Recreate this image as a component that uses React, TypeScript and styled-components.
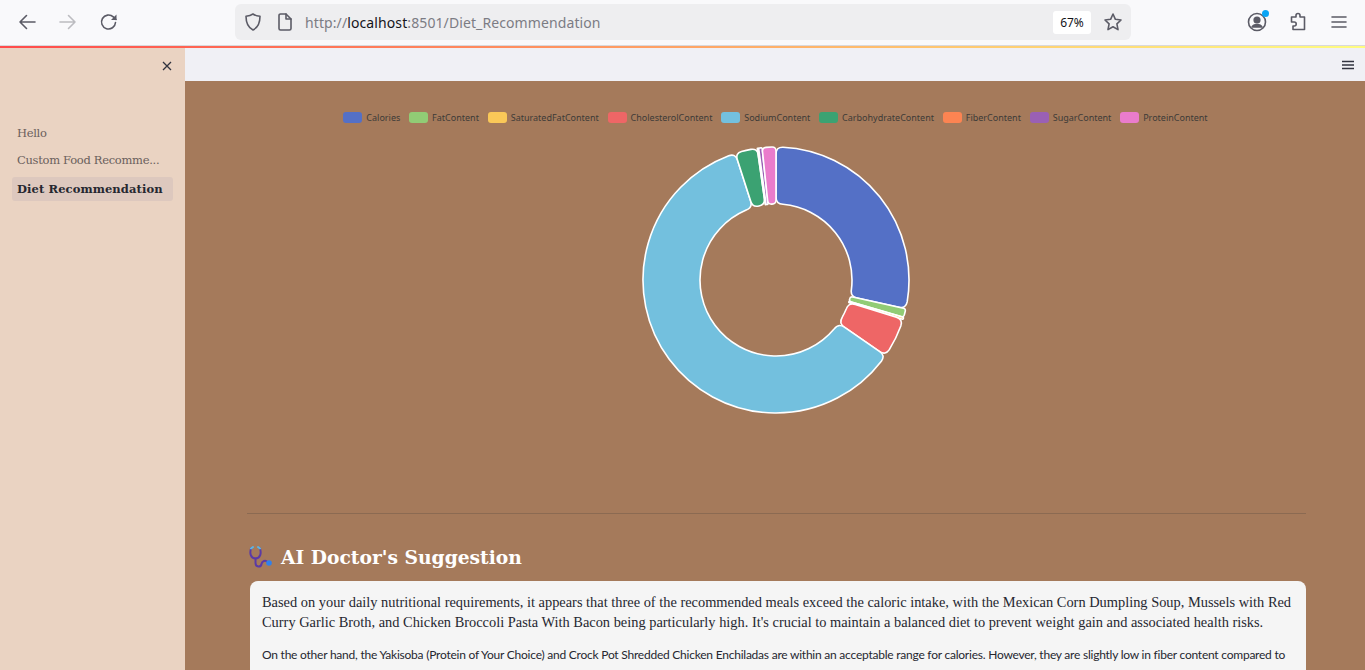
import React from "react";
import styled, { createGlobalStyle } from "styled-components";

const GlobalStyle = createGlobalStyle`
  html, body {
    margin: 0;
    height: 100%;
    overflow: hidden;
  }
  * {
    box-sizing: border-box;
  }
`;

const Page = styled.div`
  width: 1365px;
  height: 670px;
  display: flex;
  flex-direction: column;
  overflow: hidden;
  background: #a57a5b;
`;

// Browser chrome
const BrowserBar = styled.div`
  height: 46px;
  flex: none;
  display: flex;
  align-items: center;
  padding: 0 0 1px 17px;
  background: #f9f9fb;
  border-bottom: 1px solid #d9d9dc;
`;

const NavIcons = styled.div`
  width: 218px;
  display: flex;
  align-items: center;
  gap: 21px;
`;

const IconSvg = styled.svg<{ $faded?: boolean }>`
  width: 20px;
  height: 20px;
  flex: none;
  fill: none;
  stroke: ${(p) => (p.$faded ? "#bcbcc0" : "#5b5b66")};
  stroke-width: 1.6;
  stroke-linecap: round;
  stroke-linejoin: round;
`;

const UrlBar = styled.div`
  width: 896px;
  height: 36px;
  display: flex;
  align-items: center;
  gap: 12px;
  padding: 0 8px;
  background: #eeeef0;
  border-radius: 6px;
`;

const Url = styled.div`
  flex: 1;
  margin-left: -2px;
  font: 14px "Noto Sans", sans-serif;
  letter-spacing: 0.1px;
  color: #7c7c84;

  b {
    font-weight: 400;
    color: #15141a;
  }
`;

const Zoom = styled.div`
  width: 38px;
  height: 23px;
  display: flex;
  align-items: center;
  justify-content: center;
  background: #fff;
  border-radius: 3px;
  font: 12px "Noto Sans", sans-serif;
  color: #15141a;
`;

const RightIcons = styled.div`
  margin-left: 116px;
  display: flex;
  align-items: center;
  gap: 21px;
`;

const AccountWrap = styled.div`
  position: relative;
  display: flex;
`;

const Dot = styled.span`
  position: absolute;
  top: -2px;
  right: -2px;
  width: 7px;
  height: 7px;
  border-radius: 50%;
  background: #0aa5f5;
`;

const Decoration = styled.div`
  height: 2px;
  flex: none;
  background: linear-gradient(90deg, #ff4b4b, #fffd80);
`;

// App
const Body = styled.div`
  flex: 1;
  min-height: 0;
  display: flex;
`;

const Sidebar = styled.aside`
  width: 185px;
  flex: none;
  padding: 10px 12px 0;
  background: #ead3c2;
`;

const CloseRow = styled.div`
  height: 16px;
  margin: 0 -2px 47px 0;
  display: flex;
  justify-content: flex-end;
`;

const NavItem = styled.div<{ $active?: boolean }>`
  height: 24px;
  margin-top: ${(p) => (p.$active ? "5px" : 0)};
  margin-bottom: 3px;
  padding-left: 5px;
  display: flex;
  align-items: center;
  border-radius: 3px;
  white-space: nowrap;
  font-family: "DejaVu Serif", serif;
  font-size: 11.5px;
  letter-spacing: ${(p) => (p.$active ? "0.1px" : "-0.3px")};
  font-weight: ${(p) => (p.$active ? 700 : 400)};
  color: ${(p) => (p.$active ? "#262730" : "#6b5f5c")};
  background: ${(p) => (p.$active ? "#ddc8be" : "transparent")};
`;

const Content = styled.main`
  flex: 1;
  min-width: 0;
  display: flex;
  flex-direction: column;
`;

const Header = styled.div`
  height: 33px;
  flex: none;
  display: flex;
  align-items: center;
  justify-content: flex-end;
  padding-right: 11px;
  background: #f0f0f5;
`;

const Burger = styled.svg`
  width: 12px;
  height: 10px;
  stroke: #31333f;
  stroke-width: 1.4;
`;

const Column = styled.div`
  flex: 1;
  padding: 0 59px 0 62px;
`;

const Legend = styled.ul`
  list-style: none;
  margin: 0 2px 0 0;
  padding: 30px 0 0;
  height: 59px;
  display: flex;
  justify-content: center;
  gap: 8.8px;
`;

const LegendItem = styled.li`
  display: flex;
  align-items: center;
  height: 13px;
  gap: 4px;
  font: 9px "Noto Sans", sans-serif;
  color: #3d3a38;
`;

const Swatch = styled.span<{ $color: string }>`
  width: 19px;
  height: 11px;
  border-radius: 3px;
  background: ${(p) => p.$color};
`;

const DonutWrap = styled.div`
  height: 373px;
  margin-right: 2px;
  display: flex;
  justify-content: center;
`;

const Donut = styled.svg`
  width: 280px;
  height: 280px;
`;

const Divider = styled.hr`
  margin: 0;
  border: 0;
  border-top: 1px solid #8b6a52;
`;

const Heading = styled.h2`
  margin: 28px 0 9px;
  height: 30px;
  display: flex;
  align-items: center;
  gap: 8px;
  font: 700 18.7px "DejaVu Serif", serif;
  color: #fff;
`;

const Card = styled.section`
  margin-left: 3px;
  padding: 11px 12px 0;
  background: #f5f5f5;
  border-radius: 8px;
  color: #262730;
`;

const SerifText = styled.p`
  margin: 0 0 13px;
  font: 14.4px/20px "Liberation Serif", serif;
  white-space: nowrap;
`;

const SansText = styled.p`
  margin: 0;
  font: 12px/20px Lato, sans-serif;
  letter-spacing: -0.23px;
  white-space: nowrap;
`;

const slices = [
  { name: "Calories", color: "#5470c6", from: 0, to: 102.5 },
  { name: "FatContent", color: "#91cc75", from: 102.5, to: 106.3 },
  { name: "SaturatedFatContent", color: "#fac858", from: 106.3, to: 107.2 },
  { name: "CholesterolContent", color: "#ee6666", from: 107.2, to: 124.6 },
  { name: "SodiumContent", color: "#73c0de", from: 124.6, to: 342.2 },
  { name: "CarbohydrateContent", color: "#3ba272", from: 342.2, to: 351.9 },
  { name: "FiberContent", color: "#fc8452", from: 351.9, to: 352.5 },
  { name: "SugarContent", color: "#9a60b4", from: 352.5, to: 354 },
  { name: "ProteinContent", color: "#ea7ccc", from: 354, to: 360 },
];

const CX = 140;
const CY = 140;
const OUTER = 133;
const INNER = 76;

function polar(r: number, deg: number) {
  const a = (deg * Math.PI) / 180;
  return `${(CX + r * Math.sin(a)).toFixed(2)} ${(CY - r * Math.cos(a)).toFixed(2)}`;
}

// ring sector with rounded corners, radius shrinks for the thin ones
function slicePath(from: number, to: number) {
  const span = ((to - from) * Math.PI) / 180;
  const c = Math.min(7, (span * INNER) / 2);
  const dOut = ((c / OUTER) * 180) / Math.PI;
  const dIn = ((c / INNER) * 180) / Math.PI;
  const large = to - from > 180 ? 1 : 0;
  return [
    `M ${polar(OUTER, from + dOut)}`,
    `A ${OUTER} ${OUTER} 0 ${large} 1 ${polar(OUTER, to - dOut)}`,
    `Q ${polar(OUTER, to)} ${polar(OUTER - c, to)}`,
    `L ${polar(INNER + c, to)}`,
    `Q ${polar(INNER, to)} ${polar(INNER, to - dIn)}`,
    `A ${INNER} ${INNER} 0 ${large} 0 ${polar(INNER, from + dIn)}`,
    `Q ${polar(INNER, from)} ${polar(INNER + c, from)}`,
    `L ${polar(OUTER - c, from)}`,
    `Q ${polar(OUTER, from)} ${polar(OUTER, from + dOut)}`,
    "Z",
  ].join(" ");
}

const App: React.FC = () => {
  return (
    <Page>
      <GlobalStyle />
      <BrowserBar>
        <NavIcons>
          <IconSvg viewBox="0 0 20 20">
            <path d="M18 10H3M9.5 3.5 3 10l6.5 6.5" />
          </IconSvg>
          <IconSvg viewBox="0 0 20 20" $faded>
            <path d="M2 10h15M10.5 3.5 17 10l-6.5 6.5" />
          </IconSvg>
          <IconSvg viewBox="0 0 20 20">
            <path d="M16.5 10.5a7 7 0 1 1-2.2-5.6L17 7.5" />
            <path d="M17.5 2.5v5.5H12z" fill="#5b5b66" stroke="none" />
          </IconSvg>
        </NavIcons>
        <UrlBar>
          <IconSvg viewBox="0 0 20 20">
            <path d="M10 2c2 1.400 4.500 2 7 2.200 0 6.500-1.500 11-7 13.800C4.500 15.200 3 10.700 3 4.200 5.500 4 8 3.400 10 2z" />
          </IconSvg>
          <IconSvg viewBox="0 0 20 20">
            <path d="M4 3.500A1.500 1.500 0 0 1 5.500 2H11l5 5v9.500a1.500 1.500 0 0 1-1.500 1.500h-9A1.500 1.500 0 0 1 4 16.500z" />
            <path d="M11 2v5h5" />
          </IconSvg>
          <Url>
            http://<b>localhost</b>:8501/Diet_Recommendation
          </Url>
          <Zoom>67%</Zoom>
          <IconSvg viewBox="0 0 20 20">
            <path d="m10 2 2.400 5.300 5.600.7-4.100 3.900 1.100 5.700-5-2.900-5 2.900 1.100-5.700L2 8l5.600-.7z" />
          </IconSvg>
        </UrlBar>
        <RightIcons>
          <AccountWrap>
            <IconSvg viewBox="0 0 20 20">
              <circle cx="10" cy="10" r="8.500" />
              <circle cx="10" cy="8" r="2.800" fill="#5b5b66" />
              <path d="M5 15c1-2 3-2.500 5-2.500s4 .5 5 2.500z" fill="#5b5b66" />
            </IconSvg>
            <Dot />
          </AccountWrap>
          <IconSvg viewBox="0 0 20 20">
            <path d="M8 3.500a2 2 0 0 1 4 0V5h4.500v12.500H5V14h1.200a2 2 0 0 0 0-4H3.500V5H8z" />
          </IconSvg>
          <IconSvg viewBox="0 0 20 20">
            <path d="M3 5h14M3 10h14M3 15h14" />
          </IconSvg>
        </RightIcons>
      </BrowserBar>
      <Decoration />
      <Body>
        <Sidebar>
          <CloseRow>
            <svg width="16" height="16" viewBox="0 0 16 16" fill="none" stroke="#31333f" strokeWidth="1.300">
              <path d="M4 4l8 8M12 4l-8 8" />
            </svg>
          </CloseRow>
          <NavItem>Hello</NavItem>
          <NavItem>Custom Food Recomme...</NavItem>
          <NavItem $active>Diet Recommendation</NavItem>
        </Sidebar>
        <Content>
          <Header>
            <Burger viewBox="0 0 12 10">
              <path d="M0 1.500h12M0 5h12M0 8.500h12" />
            </Burger>
          </Header>
          <Column>
            <Legend>
              {slices.map((s) => (
                <LegendItem key={s.name}>
                  <Swatch $color={s.color} />
                  {s.name}
                </LegendItem>
              ))}
            </Legend>
            <DonutWrap>
              <Donut viewBox="0 0 280 280">
                {slices.map((s) => (
                  <path key={s.name} d={slicePath(s.from, s.to)} fill={s.color} stroke="#fff" strokeWidth="1.600" />
                ))}
              </Donut>
            </DonutWrap>
            <Divider />
            <Heading>
              <svg width="26" height="26" viewBox="0 0 26 26" fill="none" strokeLinecap="round">
                <path d="M4 4.500C2.500 9 3.500 14.500 8.500 14.500S14.500 9 13 4.500" stroke="#5b3aa6" strokeWidth="2" />
                <path d="M4 4.500 6 3M13 4.500 11 3" stroke="#5ab4e6" strokeWidth="2" />
                <path d="M8.500 14.500V19c0 4.500 5.500 4.500 6 1 .5-3 4-4.500 6-2" stroke="#5b3aa6" strokeWidth="2" />
                <circle cx="22" cy="19" r="2.800" fill="#2f80ed" />
              </svg>
              AI Doctor's Suggestion
            </Heading>
            <Card>
              <SerifText>
                Based on your daily nutritional requirements, it appears that three of the recommended meals exceed the caloric intake, with the Mexican Corn Dumpling Soup, Mussels with Red
                <br />
                Curry Garlic Broth, and Chicken Broccoli Pasta With Bacon being particularly high. It's crucial to maintain a balanced diet to prevent weight gain and associated health risks.
              </SerifText>
              <SansText>
                On the other hand, the Yakisoba (Protein of Your Choice) and Crock Pot Shredded Chicken Enchiladas are within an acceptable range for calories. However, they are slightly low in fiber content compared to
                <br />
                your daily requirement. To improve your fiber intake, consider adding more vegetables or whole grains to your meals for better digestion.
              </SansText>
            </Card>
          </Column>
        </Content>
      </Body>
    </Page>
  );
};

export default App;
